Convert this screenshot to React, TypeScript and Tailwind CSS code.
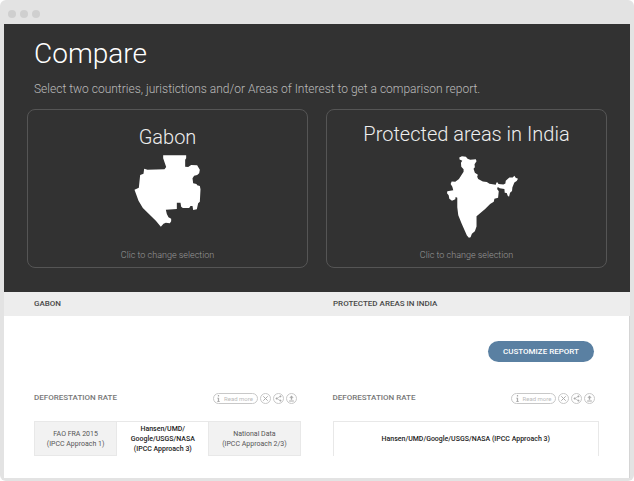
import type { ReactNode } from "react";

function GabonMap() {
  return (
    <svg viewBox="44 32 200 216" className="h-[72px] w-[67px] fill-white" aria-hidden="true">
      <path d="M131 33L200 33L200 42L197 46L197 67L206 68L215 62L233 63L236 68L241 76L239 87L233 92L224 94L219 102L221 117L231 119L233 123L241 125L243 135L241 172L236 177L232 195L221 197L219 185L213 185L209 191L190 191L185 187L183 175L172 175L172 194L139 196L142 209L147 219L155 223L155 231L151 237L139 235L132 238L124 247L109 229L70 191L57 169L45 136L58 130L62 92L72 88L74 73L84 76L135 75L140 68L131 42Z" />
    </svg>
  );
}

function IndiaMap() {
  return (
    <svg viewBox="36 33 214 246" className="ml-8 h-[82px] w-[71px] fill-white" aria-hidden="true">
      <path d="M73 37L81 33L93 35L98 41L106 44L123 42L125 48L119 57L120 66L116 71L120 83L129 89L127 95L130 102L144 109L156 111L164 116L183 119L185 112L189 112L191 117L206 118L212 115L213 107L224 97L234 97L239 92L243 98L250 101L246 108L239 112L233 127L232 138L226 143L223 155L219 152L216 144L210 143L209 132L195 130L189 126L187 132L192 139L190 158L179 161L177 170L166 177L151 192L125 214L125 245L120 259L111 267L107 277L102 279L96 272L80 236L70 211L67 187L67 158L62 156L61 163L51 167L43 161L41 151L36 145L37 139L55 136L52 125L47 117L50 109L61 110L72 102L86 80L86 72L79 65L78 53L82 47L74 43Z" />
    </svg>
  );
}

function AreaCard({ name, titleClass, children }: { name: string; titleClass: string; children: ReactNode }) {
  return (
    <button
      type="button"
      className={`flex h-[159px] flex-col items-center rounded-lg border border-[#555] pb-1 ${titleClass}`}
    >
      <span className="text-[20px] leading-7 font-light text-[#eee]">{name}</span>
      {children}
      <span className="mt-auto text-[9px] leading-4 font-light text-[#999]">Clic to change selection</span>
    </button>
  );
}

const round =
  "flex size-[11px] shrink-0 items-center justify-center rounded-full border border-[#c8c8c8] text-[#aaa]";

function RateHeader() {
  return (
    <div className="flex items-center justify-between pr-1">
      <h3 className="text-[8px] leading-3 font-medium text-[#777]">DEFORESTATION RATE</h3>
      <div className="flex items-center gap-[2px]">
        <button
          type="button"
          className="flex h-[11px] w-[45px] items-center justify-center gap-1 rounded-full border border-[#c8c8c8] text-[6px] leading-[9px] text-[#bbb]"
        >
          <svg viewBox="0 0 3 8" className="h-[7px] w-[3px] fill-[#aaa]" aria-hidden="true">
            <path d="M.8 0h1.4v1.6H.8zM0 3h2.2v4H3v1H0V7h.8V4H0z" />
          </svg>
          Read more
        </button>
        <button type="button" aria-label="Remove" className={round}>
          <svg viewBox="0 0 8 8" className="size-[7px] shrink-0 fill-none stroke-current" strokeWidth="1.1" aria-hidden="true">
            <path d="M1.5 1.5l5 5M6.5 1.5l-5 5" />
          </svg>
        </button>
        <button type="button" aria-label="Share" className={round}>
          <svg viewBox="0 0 8 8" className="size-[7px] shrink-0 fill-current stroke-current" strokeWidth=".7" aria-hidden="true">
            <path d="M6.2 1.6L1.8 4l4.4 2.4" fill="none" />
            <circle cx="6.2" cy="1.6" r=".8" />
            <circle cx="1.8" cy="4" r=".8" />
            <circle cx="6.2" cy="6.4" r=".8" />
          </svg>
        </button>
        <button type="button" aria-label="Download" className={round}>
          <svg viewBox="0 0 8 8" className="size-[7px] shrink-0 fill-current" aria-hidden="true">
            <path d="M4 .5L6.5 3.2H4.8V5.5H3.2V3.2H1.5zM1.3 6.2h5.4v1.1H1.3z" />
          </svg>
        </button>
      </div>
    </div>
  );
}

export default function App() {
  return (
    <div className="bg-white font-[Roboto,sans-serif]">
      <div className="flex min-h-screen flex-col rounded-md bg-[#e3e3e3] px-1 pb-[3px]">
        <div className="flex h-6 items-center gap-1 px-1 pt-1">
          <span className="size-2 rounded-full bg-[#cfcfcf]" />
          <span className="size-2 rounded-full bg-[#cfcfcf]" />
          <span className="size-2 rounded-full bg-[#cfcfcf]" />
        </div>
        <header className="bg-[#323232] px-[23px] pt-3 pb-6">
          <h1 className="pl-[7px] text-[28px] leading-9 font-light text-white">Compare</h1>
          <p className="mt-[9px] pl-[7px] text-[12px] leading-4 font-light text-[#bbb]">
            Select two countries, juristictions and/or Areas of Interest to get a comparison report.
          </p>
          <div className="mt-3 grid grid-cols-2 gap-[18px]">
            <AreaCard name="Gabon" titleClass="pt-[13px] gap-1">
              <GabonMap />
            </AreaCard>
            <AreaCard name="Protected areas in India" titleClass="pt-[10px] gap-2">
              <IndiaMap />
            </AreaCard>
          </div>
        </header>
        <div className="grid h-6 grid-cols-2 items-center gap-8 bg-[#ededed] px-[30px] text-[8px] leading-3 font-medium text-[#484848]">
          <h2>GABON</h2>
          <h2>PROTECTED AREAS IN INDIA</h2>
        </div>
        <main className="flex-1 border-r border-[#d5d5d5] bg-white px-[30px] pt-[25px] pb-[22px]">
          <div className="flex justify-end pr-[5px]">
            <button
              type="button"
              className="h-[21px] w-[106px] rounded-full bg-[#5a80a2] text-[8px] leading-3 font-medium text-white"
            >
              CUSTOMIZE REPORT
            </button>
          </div>
          <div className="mt-[30px] grid grid-cols-2 gap-8">
            <section>
              <RateHeader />
              <div
                role="tablist"
                className="mt-[17px] grid h-[35px] grid-cols-[83fr_92fr_92fr] border border-[#e8e8e8] border-b-0 text-[7px] leading-[10px] text-[#555]"
              >
                <button type="button" role="tab" aria-selected="false" className="border-r border-b border-[#e8e8e8] bg-[#f2f2f2]">
                  FAO FRA 2015
                  <br />
                  (IPCC Approach 1)
                </button>
                <button type="button" role="tab" aria-selected="true" className="font-medium text-[#222]">
                  Hansen/UMD/
                  <br />
                  Google/USGS/NASA
                  <br />
                  (IPCC Approach 3)
                </button>
                <button type="button" role="tab" aria-selected="false" className="border-b border-l border-[#e8e8e8] bg-[#f2f2f2]">
                  National Data
                  <br />
                  (IPCC Approach 2/3)
                </button>
              </div>
            </section>
            <section>
              <RateHeader />
              <div
                role="tablist"
                className="mt-[17px] grid h-[35px] border border-[#e8e8e8] border-b-0 text-[7px] leading-[10px] font-medium text-[#222]"
              >
                <button type="button" role="tab" aria-selected="true">
                  Hansen/UMD/Google/USGS/NASA (IPCC Approach 3)
                </button>
              </div>
            </section>
          </div>
        </main>
      </div>
    </div>
  );
}
